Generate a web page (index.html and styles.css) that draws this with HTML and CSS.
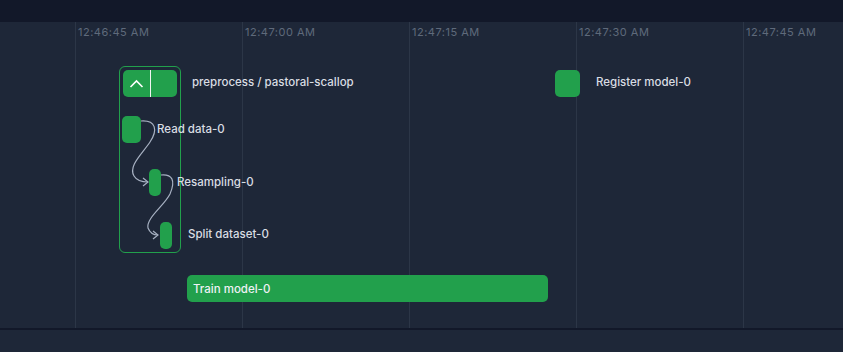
FILE: index.html
```html
<!DOCTYPE html>
<html>
<head>
    <title>Run timeline</title>
<link rel="stylesheet" href="styles.css">
</head>
<body>
    <div class="topbar"></div>

    <div class="chart">
        <div class="axis">
            <div class="tick"><span>12:46:45 AM</span></div>
            <div class="tick"><span>12:47:00 AM</span></div>
            <div class="tick"><span>12:47:15 AM</span></div>
            <div class="tick"><span>12:47:30 AM</span></div>
            <div class="tick"><span>12:47:45 AM</span></div>
        </div>

        <!-- subflow group -->
        <div class="group"></div>
        <div class="group-head">
            <span class="chevron">
                <svg width="15" height="9" viewBox="0 0 15 9"><path d="M1.5 8 L7.5 2 L13.5 8" fill="none" stroke="#fff" stroke-width="1.6"/></svg>
            </span>
            <span class="split"></span>
        </div>
        <div class="label lbl-group">preprocess / pastoral-scallop</div>

        <div class="node node-read"></div>
        <div class="label lbl-read">Read data-0</div>

        <div class="node node-resample"></div>
        <div class="label lbl-resample">Resampling-0</div>

        <div class="node node-split"></div>
        <div class="label lbl-split">Split dataset-0</div>

        <div class="node node-register"></div>
        <div class="label lbl-register">Register model-0</div>

        <div class="node node-train"><span>Train model-0</span></div>

        <svg class="edges" width="843" height="306" viewBox="0 22 843 306">
            <path d="M141 121 C156 120 158 130 150 142 C142 154 128 166 134 176 C137 181 142 182 148 182" />
            <path d="M143 178 L148 182 L143 186" />
            <path d="M161 175 C172 174 176 180 170 194 C164 206 146 218 148 228 C150 233 154 235 158 235" />
            <path d="M153 231 L158 235 L153 239" />
        </svg>
    </div>

    <div class="bottom"></div>
</body>
</html>
```

FILE: styles.css
```css
body {
  margin: 0;
  padding: 0;
  background-color: #1e2738;
  font-family: Inter, "Noto Sans", sans-serif;
  width: 843px;
  height: 352px;
  overflow: hidden;
}

.topbar {
  height: 22px;
  background-color: #121829;
}

.chart {
  position: relative;
  height: 306px;
  background-color: #1e2738;
  overflow: hidden;
}

.axis {
  display: flex;
  height: 100%;
  padding-left: 75px;
}

.tick {
  flex: 0 0 167px;
  border-left: 1px solid #2c3647;
  box-sizing: border-box;
}

.tick span {
  display: block;
  padding: 3px 0 0 2px;
  font-size: 11px;
  letter-spacing: 0.5px;
  color: #5f6a7b;
}

.group {
  position: absolute;
  left: 119px;
  top: 44px;
  width: 60px;
  height: 185px;
  border: 1px solid #22a04c;
  border-radius: 6px;
}

.group-head {
  position: absolute;
  left: 123px;
  top: 48px;
  width: 54px;
  height: 27px;
  background-color: #22a04c;
  border-radius: 5px;
  display: flex;
}

.chevron {
  width: 27px;
  display: flex;
  align-items: center;
  justify-content: center;
}

.split {
  width: 1px;
  background-color: #f1f5f1;
}

.node {
  position: absolute;
  background-color: #22a04c;
  border-radius: 5px;
}

.node-read { left: 122px; top: 94px; width: 19px; height: 27px; }
.node-resample { left: 149px; top: 147px; width: 12px; height: 27px; }
.node-split { left: 160px; top: 200px; width: 12px; height: 27px; }
.node-register { left: 555px; top: 48px; width: 25px; height: 27px; }

.node-train {
  left: 187px;
  top: 253px;
  width: 361px;
  height: 27px;
  display: flex;
  align-items: center;
  padding-left: 6px;
  box-sizing: border-box;
}

.node-train span {
  font-size: 11.5px;
  font-weight: 500;
  color: #eef1f4;
}

.label {
  position: absolute;
  font-size: 11.5px;
  font-weight: 500;
  color: #d9dde3;
  line-height: 16px;
}

.lbl-group { left: 192px; top: 52px; }
.lbl-read { left: 157px; top: 99px; }
.lbl-resample { left: 177px; top: 152px; }
.lbl-split { left: 188px; top: 204px; }
.lbl-register { left: 596px; top: 52px; }

.edges {
  position: absolute;
  left: 0;
  top: 0;
}

.edges path {
  fill: none;
  stroke: #a7b1c2;
  stroke-width: 1.2;
}

.bottom {
  height: 2px;
  background-color: #121829;
}
```
